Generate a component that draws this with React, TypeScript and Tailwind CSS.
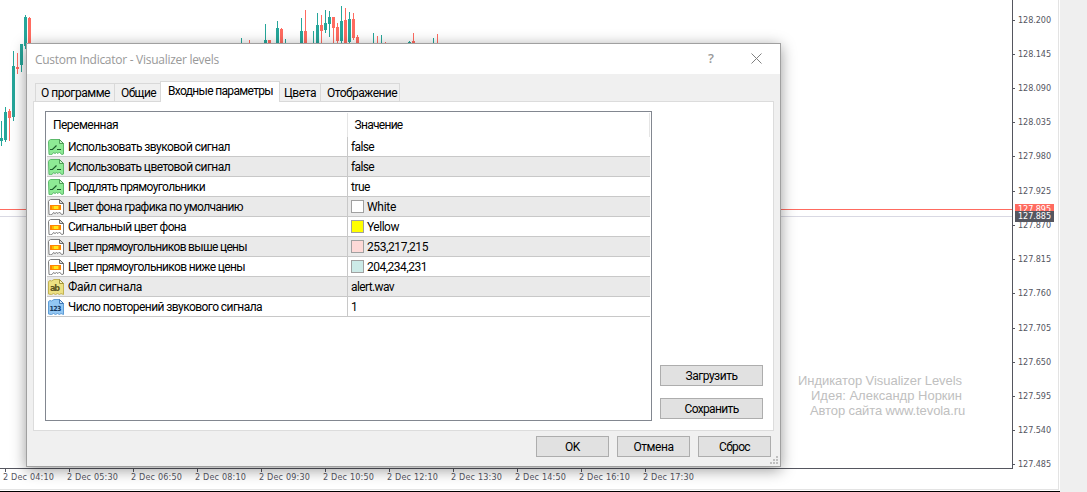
import { useLayoutEffect, useRef, useState } from "react"

const TEAL = "#26a69a"
const RED = "#ff6b60"

// x, wick top, wick bottom, body top, body bottom, color
const candles: [number, number, number, number, number, string][] = [
    [1, 121, 146, 138, 141, TEAL],
    [5, 107, 142, 112, 140, TEAL],
    [9, 109, 141, 111, 118, RED],
    [13, 51, 121, 66, 117, TEAL],
    [17, 53, 74, 67, 69, RED],
    [21, 44, 72, 44, 65, TEAL],
    [25, 15, 49, 17, 46, TEAL],
    [29, 17, 44, 18, 44, RED],
    [241, 38, 44, 44, 44, TEAL],
    [249, 40, 44, 44, 44, RED],
    [265, 24, 44, 40, 44, TEAL],
    [269, 40, 44, 40, 44, RED],
    [277, 21, 44, 28, 44, TEAL],
    [281, 28, 44, 29, 44, RED],
    [285, 39, 44, 44, 44, TEAL],
    [301, 18, 44, 31, 44, TEAL],
    [305, 10, 44, 31, 44, RED],
    [313, 31, 44, 44, 44, TEAL],
    [317, 13, 44, 25, 44, TEAL],
    [321, 15, 44, 25, 31, RED],
    [325, 10, 33, 23, 30, TEAL],
    [329, 11, 37, 17, 24, TEAL],
    [333, 17, 44, 17, 28, RED],
    [337, 23, 44, 27, 41, RED],
    [341, 6, 43, 21, 41, TEAL],
    [345, 8, 44, 20, 43, RED],
    [349, 12, 44, 19, 42, TEAL],
    [353, 13, 40, 19, 38, RED],
    [357, 35, 44, 37, 44, RED],
    [373, 33, 44, 44, 44, TEAL],
    [377, 36, 44, 44, 44, RED],
    [381, 35, 44, 44, 44, TEAL],
    [385, 42, 44, 44, 44, RED],
    [409, 41, 44, 42, 44, TEAL],
    [413, 33, 44, 41, 44, RED],
    [433, 38, 44, 43, 44, TEAL],
    [437, 34, 44, 43, 44, RED],
]

const prices = [
    { value: "128.200", height: "h-[34px]" },
    { value: "128.145", height: "h-[34px]" },
    { value: "128.090", height: "h-[34px]" },
    { value: "128.035", height: "h-[34px]" },
    { value: "127.980", height: "h-[35px]" },
    { value: "127.925", height: "h-[34px]" },
    { value: "127.870", height: "h-[34px]" },
    { value: "127.815", height: "h-[34px]" },
    { value: "127.760", height: "h-[35px]" },
    { value: "127.705", height: "h-[34px]" },
    { value: "127.650", height: "h-[34px]" },
    { value: "127.595", height: "h-[34px]" },
    { value: "127.540", height: "h-[34px]" },
    { value: "127.485", height: "h-[11px]" },
]

const times = ["04:10", "05:30", "06:50", "08:10", "09:30", "10:50", "12:10", "13:30", "14:50", "16:10", "17:30"]

const tabs = [
    { name: "О программе", size: "w-[79px] pl-[5px]", width: 69 },
    { name: "Общие", size: "w-[46px] pl-[6px]", width: 35 },
    { name: "Входные параметры", size: "w-[120px] pl-[7px]", width: 105, active: true },
    { name: "Цвета", size: "w-[41px] pl-[4px]", width: 32 },
    { name: "Отображение", size: "w-[79px] pl-[6px]", width: 70 },
]

type Row = {
    icon: "bool" | "color" | "text" | "number"
    name: string
    width: number
    value: string
    valueWidth: number
    swatch?: string
}

const rows: Row[] = [
    { icon: "bool", name: "Использовать звуковой сигнал", width: 162, value: "false", valueWidth: 23 },
    { icon: "bool", name: "Использовать цветовой сигнал", width: 162, value: "false", valueWidth: 23 },
    { icon: "bool", name: "Продлять прямоугольники", width: 137, value: "true", valueWidth: 19 },
    { icon: "color", name: "Цвет фона графика по умолчанию", width: 175, value: "White", valueWidth: 29, swatch: "bg-white" },
    { icon: "color", name: "Сигнальный цвет фона", width: 118, value: "Yellow", valueWidth: 32, swatch: "bg-[#ffff00]" },
    { icon: "color", name: "Цвет прямоугольников выше цены", width: 179, value: "253,217,215", valueWidth: 61, swatch: "bg-[#fdd9d7]" },
    { icon: "color", name: "Цвет прямоугольников ниже цены", width: 177, value: "204,234,231", valueWidth: 60, swatch: "bg-[#cceae7]" },
    { icon: "text", name: "Файл сигнала", width: 74, value: "alert.wav", valueWidth: 43 },
    { icon: "number", name: "Число повторений звукового сигнала", width: 194, value: "1", valueWidth: 6 },
]

// Spreads the letters so that a caption takes the given width
function Caption({ text, width }: { text: string; width: number }) {
    const ref = useRef<HTMLSpanElement>(null)
    const [spacing, setSpacing] = useState(0)

    useLayoutEffect(() => {
        if (ref.current) {
            const natural = ref.current.getBoundingClientRect().width
            setSpacing((width - natural) / text.length)
        }
    }, [])

    return (
        <span ref={ref} className="inline-block whitespace-pre" style={{ letterSpacing: `${spacing}px` }}>
            {text}
        </span>
    )
}

function RowIcon({ kind }: { kind: Row["icon"] }) {
    const colors = {
        bool: { fill: "#8eea95", line: "#5cb96a", fold: "#4f9a57", corner: "#c9f7cc" },
        color: { fill: "#ffffff", line: "#7c7c7c", fold: "#6a6a6a", corner: "#d8d8d8" },
        text: { fill: "#ece083", line: "#c2b252", fold: "#a2943c", corner: "#f8f2c0" },
        number: { fill: "#93c7f3", line: "#5f9dd6", fold: "#3f78b8", corner: "#cfe6fb" },
    }[kind]
    const torn = kind === "bool" || kind === "color"

    return (
        <svg width="16" height="16" viewBox="0 0 16 16" className="shrink-0">
            <path
                d={
                    torn
                        ? "M.5 2.5l1-1.5 1-.5h9l4 4v10.500l-1.500.5-1.500-1-1-1.500-1.500 1.500-1.500-1-1.500 1-1.500-1-1 1.500-1.500 1-2-.5z"
                        : "M.5 2.5l1.500-1 1.500.5 2.500-1.500h5.500l4 4v11l-2.500-1-1.500 1-2-1-2 1-2-1-2 1-3-.5z"
                }
                fill={colors.fill}
                stroke={colors.line}
            />
            <path d="M11.500.5v4h4z" fill={colors.corner} stroke={colors.fold} />
            {kind === "bool" && <path d="M2 10.500h2.500l4-4M9 10.500h4" fill="none" stroke="#1c5a2a" strokeWidth="1.200" />}
            {kind === "color" && (
                <>
                    <rect x="2" y="6" width="11" height="5" fill="#ff8400" />
                    <rect x="4" y="7" width="7" height="3" fill="#ffb800" />
                    <rect x="6" y="7" width="4" height="3" fill="#ffe61e" />
                </>
            )}
            {kind === "text" && (
                <text x="2" y="11.500" fontSize="9" fontWeight="bold" textLength="10" fontFamily="DejaVu Sans Condensed, sans-serif" fill="#5a5320">ab</text>
            )}
            {kind === "number" && (
                <text x="1.500" y="11.500" fontSize="7" fontWeight="bold" textLength="12" fontFamily="DejaVu Sans Condensed, sans-serif" fill="#14375f">123</text>
            )}
        </svg>
    )
}

function Button({ text, width, className }: { text: string; width: number; className: string }) {
    return (
        <button className={`h-[21px] flex items-center justify-center border border-[#adadad] bg-[#e1e1e1] pt-px ${className}`}>
            <Caption text={text} width={width} />
        </button>
    )
}

function Chart() {
    return (
        <div className="w-[1060px] h-[492px] border-b border-black">
            <div className="w-[1059px] h-[490px] border-r border-b border-[#e3e3e3]">
                <div className="flex h-[469px]">
                    <div className="relative w-[1013px] h-[469px] border-r border-b border-[#55565f]">
                        <svg width="1012" height="468" shapeRendering="crispEdges">
                            {candles.map(([x, top, bottom, bodyTop, bodyBottom, color]) => (
                                <g key={x} fill={color}>
                                    <rect x={x} y={top} width="1" height={bottom - top} />
                                    <rect x={x - 1} y={bodyTop} width="3" height={bodyBottom - bodyTop} />
                                </g>
                            ))}
                            <rect y="209" width="1012" height="1" fill="#ff6b60" />
                            <rect y="216" width="1012" height="1" fill="#d9d9e3" />
                        </svg>
                        <div className="absolute left-[798px] top-[373px] font-['Liberation_Sans',sans-serif] text-[13px] leading-[15px] text-[#c0c0c0]">
                            <p><Caption text="Индикатор Visualizer Levels" width={164} /></p>
                            <p className="pl-[13px]"><Caption text="Идея: Александр Норкин" width={151} /></p>
                            <p className="pl-[12px]"><Caption text="Автор сайта www.tevola.ru" width={155} /></p>
                        </div>
                    </div>
                    <div className="relative pt-[15px]">
                        {prices.map((price) => (
                            <div className={`flex items-start ${price.height}`} key={price.value}>
                                <span className="w-[2px] h-px mt-[5px] bg-[#55565f]" />
                                <span className="pl-[3px] leading-[11px]"><Caption text={price.value} width={33} /></span>
                            </div>
                        ))}
                        <div className="absolute left-[2px] top-[204px] w-[39px] h-[7px] overflow-hidden pl-[3px] bg-[#ff6b60] text-white leading-[11px]">
                            <Caption text="127.895" width={33} />
                        </div>
                        <div className="absolute left-[2px] top-[211px] w-[39px] h-[11px] pl-[3px] bg-[#55565f] text-white leading-[11px]">
                            <Caption text="127.885" width={33} />
                        </div>
                    </div>
                </div>
                <div className="flex pl-[3px]">
                    {times.map((time) => (
                        <div className="w-16 shrink-0" key={time}>
                            <div className="ml-[2px] w-px h-[3px] bg-[#55565f]" />
                            <div className="leading-[11px]"><Caption text={`2 Dec ${time}`} width={51} /></div>
                        </div>
                    ))}
                </div>
            </div>
        </div>
    )
}

function ParamsTable() {
    return (
        <div className="w-[607px] h-[310px] border border-[#828790] bg-white p-px">
            <div className="flex h-6">
                <div className="w-[301px] h-6 pl-[6px] pt-[5px] border-r border-[#e5e5e5]">
                    <Caption text="Переменная" width={65} />
                </div>
                <div className="w-[303px] h-6 pl-[7px] pt-[5px] border-r border-[#e5e5e5]">
                    <Caption text="Значение" width={48} />
                </div>
            </div>
            {rows.map((row, i) => (
                <div className={`flex h-5 border-b border-[#c8c8c8] ${i % 2 ? "bg-[#eaeaea]" : "bg-white"}`} key={row.name}>
                    <div className="w-[301px] pl-px pt-[2px] flex items-start gap-1 border-r border-[#c8c8c8]">
                        <RowIcon kind={row.icon} />
                        <span className="pt-px"><Caption text={row.name} width={row.width} /></span>
                    </div>
                    <div className="pl-[3px] pt-[3px] flex items-start gap-[3px]">
                        {row.swatch && <span className={`w-[13px] h-[13px] border border-[#a0a0a0] ${row.swatch}`} />}
                        <Caption text={row.value} width={row.valueWidth} />
                    </div>
                </div>
            ))}
        </div>
    )
}

function SettingsDialog() {
    return (
        <div className="absolute left-[26px] top-[43px] w-[755px] h-[424px] border border-[#a0a0a0] bg-[#f0f0f0] shadow-[0_3px_14px_rgba(0,0,0,0.4)] font-['Roboto',sans-serif] text-[12px] leading-[15px] text-black">
            <div className="h-[30px] bg-white flex items-center justify-between pl-2 pr-[18px] text-[#999999] font-['Open_Sans',sans-serif] font-medium">
                <Caption text="Custom Indicator - Visualizer levels" width={184} />
                <div className="flex items-center gap-[37px] pb-px">
                    <span className="text-[13px] font-semibold">?</span>
                    <svg width="11" height="11" viewBox="0 0 11 11" stroke="#808080">
                        <path d="M.5.5l10 10M10.500.5l-10 10" />
                    </svg>
                </div>
            </div>
            <div className="px-[6px] pt-[7px]">
                <div className="relative flex items-end h-[21px] pl-[2px] -mb-px">
                    {tabs.map((tab, i) =>
                        tab.active ? (
                            <div className={`h-[21px] pt-[2px] border border-b-0 border-[#d9d9d9] bg-white ${tab.size}`} key={tab.name}>
                                <Caption text={tab.name} width={tab.width} />
                            </div>
                        ) : (
                            <div
                                className={`h-[19px] pt-[2px] border-y border-[#d9d9d9] ${i < 2 ? "border-l" : "border-r"} ${tab.size}`}
                                key={tab.name}
                            >
                                <Caption text={tab.name} width={tab.width} />
                            </div>
                        )
                    )}
                </div>
                <div className="w-[741px] h-[330px] flex gap-2 border border-[#dcdcdc] bg-white pt-[9px] pl-[11px]">
                    <ParamsTable />
                    <div className="flex flex-col gap-3 pt-[254px]">
                        <Button text="Загрузить" width={52} className="w-[103px]" />
                        <Button text="Сохранить" width={54} className="w-[103px]" />
                    </div>
                </div>
            </div>
            <div className="flex justify-end gap-2 pt-[5px] pr-[9px]">
                <Button text="OK" width={15} className="w-[73px]" />
                <Button text="Отмена" width={40} className="w-[73px]" />
                <Button text="Сброс" width={31} className="w-[73px]" />
            </div>
            <svg width="8" height="8" className="absolute right-[2px] bottom-[2px]" fill="#bfbfbf" shapeRendering="crispEdges">
                <path d="M6 0h2v2h-2zM3 3h2v2h-2zM6 3h2v2h-2zM0 6h2v2h-2zM3 6h2v2h-2zM6 6h2v2h-2z" />
            </svg>
        </div>
    )
}

function App() {
    return (
        <div className="relative w-[1087px] h-[492px] flex overflow-hidden bg-[#efefef] font-['DejaVu_Sans_Condensed','DejaVu_Sans',sans-serif] text-[9px] text-[#55565f]">
            <div className="bg-white">
                <Chart />
            </div>
            <SettingsDialog />
        </div>
    )
}

export default App
